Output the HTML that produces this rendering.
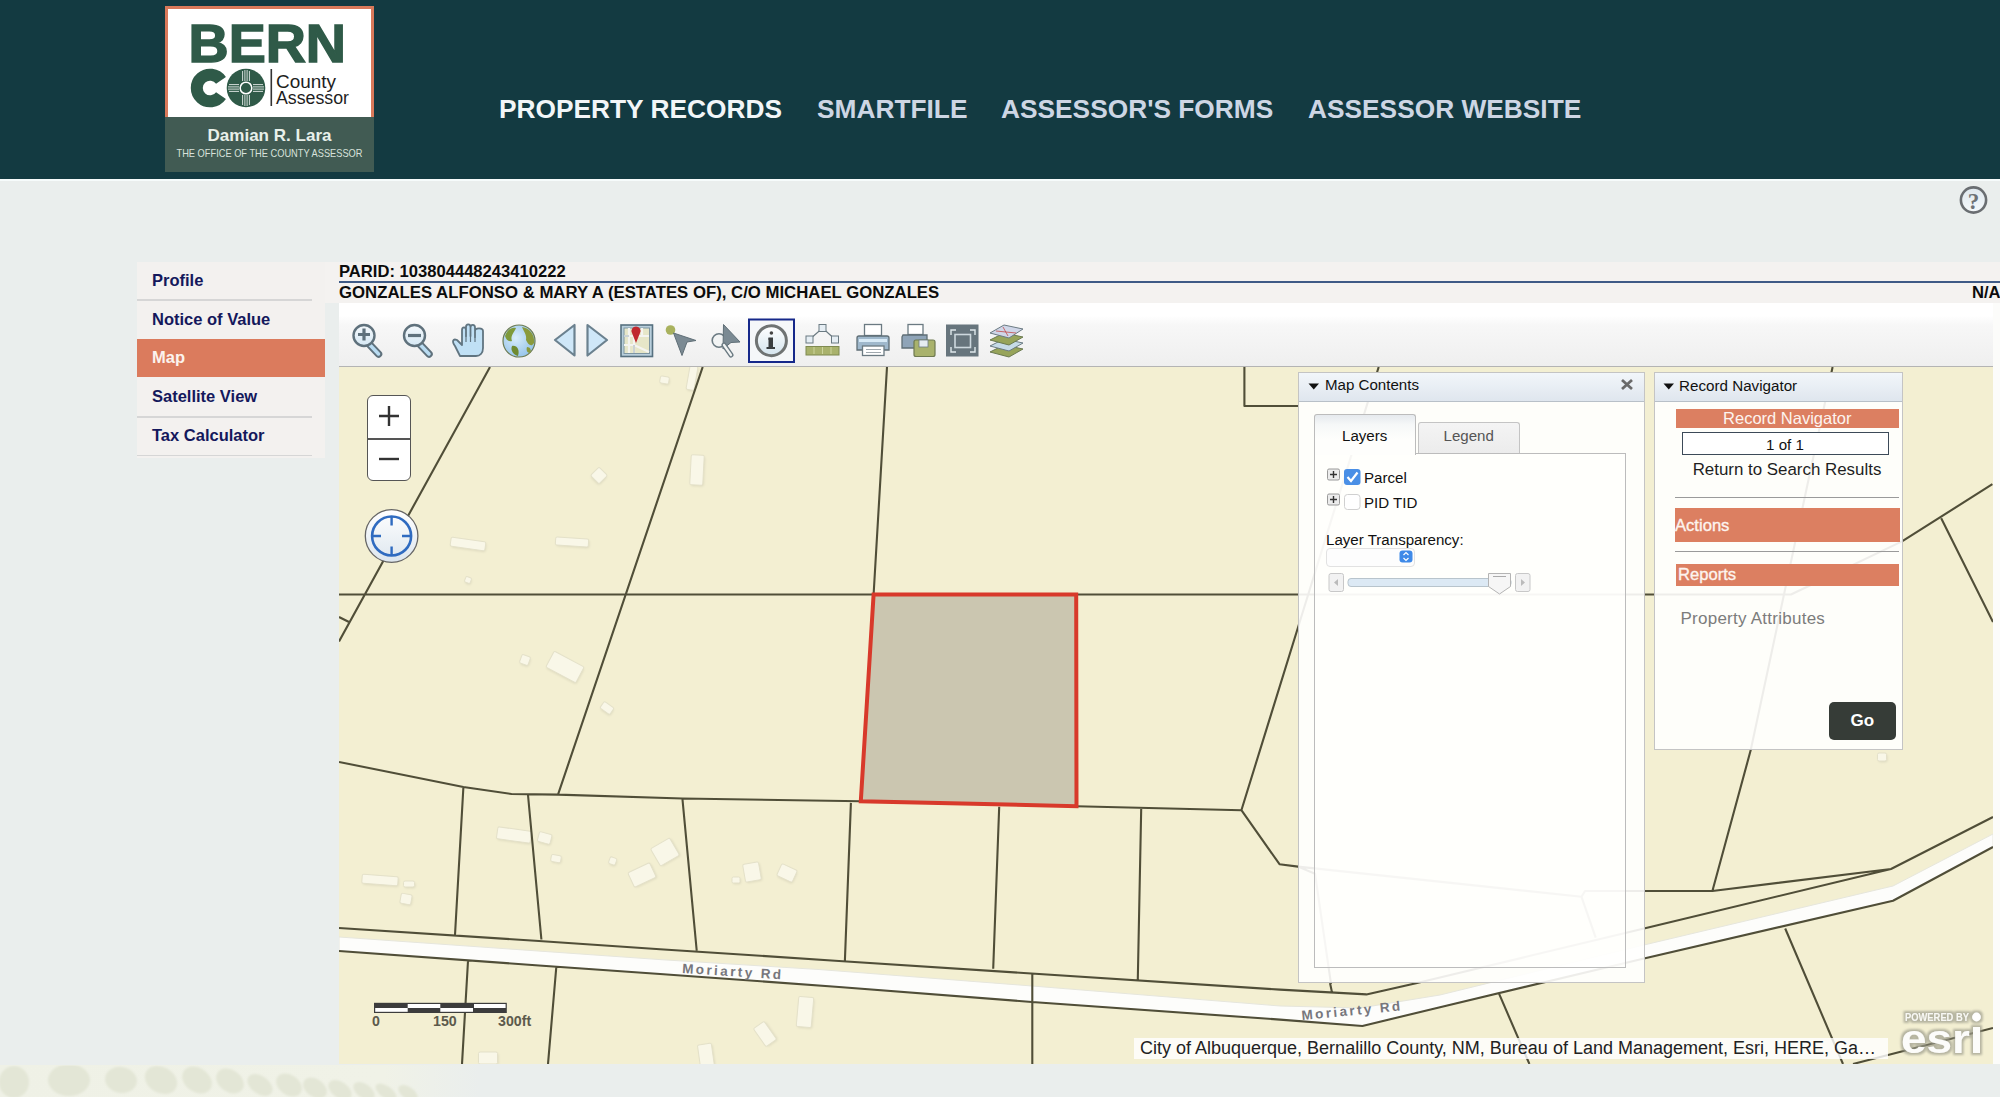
<!DOCTYPE html>
<html><head><meta charset="utf-8">
<style>
*{margin:0;padding:0;box-sizing:border-box}
html,body{width:2000px;height:1097px;overflow:hidden}
body{background:#eaeeed;font-family:"Liberation Sans",sans-serif;position:relative}
.abs{position:absolute}
#hdr{left:0;top:0;width:2000px;height:179px;background:#133a41}
#hdrline{left:0;top:179px;width:2000px;height:2px;background:#f6fbfb}
#logo{left:165px;top:6px;width:209px;height:166px;background:#415b53}
#logoW{left:0;top:0;width:209px;height:111px;background:#fff;border:3px solid #d9795a;border-bottom:none}
.nav{top:92px;font-size:26.3px;font-weight:bold;color:#cdd6e4;white-space:nowrap;line-height:34px}
.li{position:absolute;left:0;width:175px;height:39px;font-size:16.5px;font-weight:bold;color:#14185c;padding-left:15px;white-space:nowrap}
.li span{position:absolute;left:15px;top:11px;line-height:16px}
.sep{position:absolute;left:0;width:175px;height:1.5px;background:#d6d6d6}
#content{left:325px;top:262px;width:1675px;height:41px;background:#f4f2f0}
#toolbar{left:339px;top:303px;width:1654px;height:64px;background:linear-gradient(#fff 0,#fff 20%,#f7f7f7 35%,#efefef 100%);border-bottom:1px solid #b4b4b4}
#map{left:339px;top:367px;width:1654px;height:697px;background:#f3efd2;overflow:hidden}
#rstrip{left:1993px;top:303px;width:7px;height:761px;background:#fcfcfa}
.bt{font-weight:bold;color:#0c0c0c;font-size:16.6px;white-space:nowrap;line-height:16px}
</style></head><body>
<div id="hdr" class="abs"></div>
<div id="hdrline" class="abs"></div>
<!-- LOGO -->
<div id="logo" class="abs"><div id="logoW" class="abs"></div>
<svg class="abs" style="left:0;top:0" width="209" height="166" viewBox="0 0 209 166">
 <text x="23.5" y="56.3" font-family="Liberation Sans" font-weight="bold" font-size="53.5" fill="#2f5a48" textLength="157.5" lengthAdjust="spacingAndGlyphs" style="stroke:#2f5a48;stroke-width:1.5">BERN</text>
 <path d="M56 74.4 A13.3 13.3 0 1 0 56 89.6" fill="none" stroke="#2f5a48" stroke-width="12"/>
 <circle cx="81" cy="82" r="19.3" fill="#2f5a48"/>
 <circle cx="81" cy="82" r="5.8" fill="#2f5a48" stroke="#fff" stroke-width="1.5"/>
 <g stroke="#fff" stroke-width="0.8" fill="none">
  <path d="M77.6 65v10M79.9 64v11M82.1 64v11M84.4 65v10"/>
  <path d="M77.6 89v10M79.9 89v11M82.1 89v11M84.4 89v10"/>
  <path d="M64 78.6h10M63 80.9h11M63 83.1h11M64 85.4h10"/>
  <path d="M88 78.6h10M88 80.9h11M88 83.1h11M88 85.4h10"/>
 </g>
 <rect x="105.5" y="63" width="1.6" height="37" fill="#333"/>
 <text x="111" y="82" font-family="Liberation Sans" font-size="17.5" fill="#1e1e1e" textLength="60" lengthAdjust="spacingAndGlyphs">County</text>
 <text x="111" y="98" font-family="Liberation Sans" font-size="17.5" fill="#1e1e1e" textLength="73" lengthAdjust="spacingAndGlyphs">Assessor</text>
 <text x="104.5" y="135" text-anchor="middle" font-family="Liberation Sans" font-weight="bold" font-size="17" fill="#e8f0ea" textLength="124" lengthAdjust="spacingAndGlyphs">Damian R. Lara</text>
 <text x="104.5" y="151" text-anchor="middle" font-family="Liberation Sans" font-size="10.5" fill="#d8e2dc" textLength="186" lengthAdjust="spacingAndGlyphs">THE OFFICE OF THE COUNTY ASSESSOR</text>
</svg>
</div>
<div class="abs nav" style="left:499px;color:#f2f6f8">PROPERTY RECORDS</div>
<div class="abs nav" style="left:817px">SMARTFILE</div>
<div class="abs nav" style="left:1001px">ASSESSOR'S FORMS</div>
<div class="abs nav" style="left:1308px">ASSESSOR WEBSITE</div>

<!-- help icon -->
<svg class="abs" style="left:1958px;top:185px" width="31" height="31" viewBox="0 0 31 31">
 <defs><linearGradient id="hg" x1="0" y1="0" x2="0" y2="1"><stop offset="0" stop-color="#dfe8ee"/><stop offset="1" stop-color="#f4f8fa"/></linearGradient></defs><circle cx="15.5" cy="15" r="12.6" fill="url(#hg)" stroke="#6a6e72" stroke-width="2.6"/>
 <text x="15.5" y="23.5" text-anchor="middle" font-family="Liberation Serif" font-weight="bold" font-size="23" fill="#6e7276">?</text>
</svg>

<div id="content" class="abs"></div>
<!-- left nav -->
<div class="abs" style="left:137px;top:262px;width:188px;height:196px;background:#f3f1ef">
 <div class="li" style="top:0"><span style="top:9.7px">Profile</span></div>
 <div class="sep" style="top:37px"></div>
 <div class="li" style="top:39px"><span style="top:9.7px">Notice of Value</span></div>
 <div class="li" style="top:77px;width:188px;height:38px;background:#db7b5d;color:#fbf3ee"><span style="top:9.7px">Map</span></div>
 <div class="li" style="top:116px"><span style="top:9.7px">Satellite View</span></div>
 <div class="sep" style="top:154px"></div>
 <div class="li" style="top:155px"><span style="top:9.7px">Tax Calculator</span></div>
 <div class="sep" style="top:192.5px"></div>
</div>

<div class="abs bt" style="left:339px;top:264px">PARID: 103804448243410222</div>
<div class="abs" style="left:339px;top:281px;width:1661px;height:1.5px;background:#3e5a86"></div>
<div class="abs bt" style="left:339px;top:284.5px;font-size:16.75px">GONZALES ALFONSO &amp; MARY A (ESTATES OF), C/O MICHAEL GONZALES</div>
<div class="abs bt" style="left:1972px;top:284.5px">N/A</div>

<div id="toolbar" class="abs"></div>
<div id="rstrip" class="abs"></div>
<div id="map" class="abs"></div>
<!--TOOLS-->
<svg class="abs" style="left:339px;top:303px" width="700" height="64" viewBox="339 303 700 64">
 <defs>
  <linearGradient id="lens" x1="0" y1="0" x2="0" y2="1"><stop offset="0" stop-color="#f4f8fb"/><stop offset="1" stop-color="#d6e8f4"/></linearGradient>
  <radialGradient id="glb" cx="0.4" cy="0.4" r="0.7"><stop offset="0" stop-color="#d8ecfa"/><stop offset="1" stop-color="#8fc0e8"/></radialGradient>
  <linearGradient id="infog" x1="0" y1="0" x2="0" y2="1"><stop offset="0" stop-color="#ffffff"/><stop offset="1" stop-color="#d4e4ee"/></linearGradient>
 </defs>
 <!-- zoom in -->
 <path d="M370 345 L378.5 354" stroke="#5f717c" stroke-width="7.5" stroke-linecap="round"/>
 <path d="M370 345 L378.5 354" stroke="#b9dcf2" stroke-width="3.5" stroke-linecap="round"/>
 <circle cx="364" cy="335.5" r="10.5" fill="url(#lens)" stroke="#5f717c" stroke-width="2.4"/>
 <path d="M358 334.5h12M364 328.5v12" stroke="#5f717c" stroke-width="3.2"/>
 <!-- zoom out -->
 <path d="M420.5 345 L429 354" stroke="#5f717c" stroke-width="7.5" stroke-linecap="round"/>
 <path d="M420.5 345 L429 354" stroke="#b9dcf2" stroke-width="3.5" stroke-linecap="round"/>
 <circle cx="414.5" cy="335.5" r="10.5" fill="url(#lens)" stroke="#5f717c" stroke-width="2.4"/>
 <path d="M408 335.5h13" stroke="#5f717c" stroke-width="3.2"/>
 <!-- hand -->
 <path d="M460 356 L455 346 C451.5 341 453 338.5 457 340 L462 345 L462 330 C462 326.5 466 326.5 466 330 L466 336 L466 327 C466 323.5 470.5 323.5 470.5 327 L470.5 336 L470.5 327.5 C470.5 324 475 324 475 327.5 L475 337 L475 331 C475 327.5 483 327.5 483 331 L483 348 C483 353 480 356 476 356 Z" fill="#c0e0f5" stroke="#607480" stroke-width="1.8" stroke-linejoin="round"/>
 <path d="M466 336v6M470.5 336v6M475 337v5" stroke="#607480" stroke-width="1.2"/>
 <!-- globe -->
 <circle cx="519" cy="341" r="16" fill="url(#glb)" stroke="#6b7a50" stroke-width="1.2"/>
 <path d="M505 336 C508 328 513 327 516 328 C514 333 510 336 512 341 C509 342 506 340 505 336Z" fill="#7f9a3a"/>
 <path d="M522 327 C530 328 535 335 534 343 C531 348 528 344 526 340 C527 335 524 332 522 327Z" fill="#8a9a3c"/>
 <path d="M512 346 C517 345 520 350 518 356 C514 355 510 351 512 346Z" fill="#6f8a30"/>
 <path d="M527 347 C530 347 532 350 530 353 C527 353 526 350 527 347Z" fill="#8a9a3c"/>
 <!-- prev / next -->
 <path d="M555 340 L574.5 325 L574.5 355.5 Z" fill="#cfe7f8" stroke="#6b818f" stroke-width="2.2" stroke-linejoin="round"/>
 <path d="M587.5 325 L607 340 L587.5 355.5 Z" fill="#cfe7f8" stroke="#6b818f" stroke-width="2.2" stroke-linejoin="round"/>
 <!-- map icon -->
 <rect x="621" y="325" width="31.5" height="31.5" fill="#b9cfdc" stroke="#56707f" stroke-width="1.6"/>
 <rect x="624" y="328" width="25.5" height="25.5" fill="#e6e6c8" stroke="#7d95a2" stroke-width="1"/>
 <path d="M624 336h25M624 345h10M629 328v25M634 336v17M642 328v8M634 345 L649 352" stroke="#f4f4f0" stroke-width="2.2"/>
 <path d="M629 336 L624 336M634 345 L634 353" stroke="#8aa0aa" stroke-width="0.8"/>
 <path d="M636 343 L632 333 A4.5 4.5 0 1 1 640 333 Z" fill="#c0282e"/>
 <!-- select arrow -->
 <circle cx="670.5" cy="330" r="4.8" fill="#a9b25e"/>
 <path d="M673.5 333 L696 340.5 L687 342 L682 355.5 Z" fill="#7b8a93" stroke="#5f6e76" stroke-width="1"/>
 <!-- select by shape -->
 <circle cx="719" cy="340.5" r="6.8" fill="#f2f4f4" stroke="#6b7a82" stroke-width="1.6"/>
 <path d="M723.5 324.5 L740 342 L731 342.5 L723 349 Z" fill="#7b8a93" stroke="#5f6e76" stroke-width="1"/>
 <path d="M724 345 L731 355" stroke="#6b7a82" stroke-width="5" stroke-linecap="round"/>
 <path d="M724 345 L731 355" stroke="#f2f4f4" stroke-width="2.2" stroke-linecap="round"/>
 <!-- info selected -->
 <rect x="749" y="319.5" width="45" height="42.5" fill="#f5f7f9" stroke="#16288a" stroke-width="2"/>
 <circle cx="771.4" cy="340.7" r="15" fill="url(#infog)" stroke="#6f7373" stroke-width="3"/>
 <circle cx="771.4" cy="333" r="1.8" fill="#444"/>
 <path d="M768.5 337.5h4.5v9.5h2v2h-8.5v-2h2v-7.5h-0.5z" fill="#3a3e40"/>
 <!-- measure -->
 <path d="M809.5 339.5 L822.6 328 L835.2 339.5" fill="none" stroke="#6b7a82" stroke-width="1.2"/>
 <rect x="819" y="324.5" width="7" height="7" fill="#e6eef4" stroke="#6b7a82" stroke-width="1"/>
 <rect x="806" y="336" width="7" height="7" fill="#e6eef4" stroke="#6b7a82" stroke-width="1"/>
 <rect x="831.5" y="336" width="7" height="7" fill="#e6eef4" stroke="#6b7a82" stroke-width="1"/>
 <rect x="806" y="346.5" width="33" height="8.5" fill="#a9b26c" stroke="#7f8a50" stroke-width="1"/>
 <path d="M814 347v7M822.5 347v7M831 347v7" stroke="#cdd49c" stroke-width="1"/>
 <!-- print -->
 <rect x="864.5" y="324.5" width="17" height="11" fill="#fff" stroke="#6b7a82" stroke-width="1.3"/>
 <path d="M859 336 h28 a2 2 0 0 1 2 2 v12 h-32 v-12 a2 2 0 0 1 2-2z" fill="#9fb8cc" stroke="#5f6e76" stroke-width="1.3"/>
 <rect x="859" y="339" width="28" height="3" fill="#d8eaf6"/>
 <rect x="862.5" y="346" width="21.5" height="9.5" fill="#fff" stroke="#6b7a82" stroke-width="1.3"/>
 <path d="M866 349.5h15M866 352.5h15" stroke="#a0a8ae" stroke-width="1"/>
 <!-- print2 -->
 <rect x="908" y="324.5" width="15" height="10" fill="#fff" stroke="#6b7a82" stroke-width="1.3"/>
 <path d="M903 335 h24 v13 h-25 v-11z" fill="#8fa4b8" stroke="#5f6e76" stroke-width="1.3"/>
 <rect x="914" y="340" width="21" height="16.5" rx="2" fill="#a9b26c" stroke="#6f7a50" stroke-width="1.2"/>
 <rect x="919" y="340" width="9" height="7" fill="#e6ecf0" stroke="#6b7a82" stroke-width="0.8"/>
 <!-- full extent -->
 <rect x="946" y="324.5" width="32.5" height="32" fill="#67757d"/>
 <rect x="955" y="334.5" width="15.5" height="13" fill="none" stroke="#cdd8de" stroke-width="1.6"/>
 <path d="M951 335v-5h5M970 330h5v5M951 347v5h5M970 352h5v-5" fill="none" stroke="#dfe8ec" stroke-width="1.4"/>
 <!-- layers -->
 <path d="M990 352 L1004 345 L1023 349 L1009 357 Z" fill="#97a45a" stroke="#6b7a50" stroke-width="1"/>
 <path d="M990 346 L1004 339 L1023 343 L1009 351 Z" fill="#c6dbe8" stroke="#6b7a82" stroke-width="1"/>
 <path d="M990 340 L1004 333 L1023 337 L1009 345 Z" fill="#97a45a" stroke="#6b7a50" stroke-width="1"/>
 <path d="M990 333 L1004 325 L1023 329 L1009 338 Z" fill="#cfd6e8" stroke="#6b7a82" stroke-width="1"/>
 <path d="M996 331 L1016 333M1003 327 L1008 336" stroke="#c24a4a" stroke-width="0.8"/>
</svg>


<!--MAPSVG-->
<svg class="abs" style="left:339px;top:367px" width="1654" height="697" viewBox="339 367 1654 697">
<defs><filter id="bsh" x="-50%" y="-50%" width="200%" height="200%"><feGaussianBlur stdDeviation="0.9"/></filter></defs>
<rect x="339" y="367" width="1654" height="697" fill="#f3efd2"/>
<rect x="451.5" y="540.7" width="35" height="9" rx="2" fill="#dedabf" transform="rotate(8 468 544)" filter="url(#bsh)"/>
<rect x="450.5" y="539.5" width="35" height="9" rx="1.5" fill="#f9f7e8" stroke="#e4e1c9" stroke-width="1" transform="rotate(8 468 544)"/>
<rect x="556.5" y="539.2" width="33" height="8" rx="2" fill="#dedabf" transform="rotate(4 572 542)" filter="url(#bsh)"/>
<rect x="555.5" y="538.0" width="33" height="8" rx="1.5" fill="#f9f7e8" stroke="#e4e1c9" stroke-width="1" transform="rotate(4 572 542)"/>
<rect x="594.0" y="470.7" width="12" height="12" rx="2" fill="#dedabf" transform="rotate(45 599 475.5)" filter="url(#bsh)"/>
<rect x="593.0" y="469.5" width="12" height="12" rx="1.5" fill="#f9f7e8" stroke="#e4e1c9" stroke-width="1" transform="rotate(45 599 475.5)"/>
<rect x="691.5" y="456.2" width="13" height="30" rx="2" fill="#dedabf" transform="rotate(3 697 470)" filter="url(#bsh)"/>
<rect x="690.5" y="455.0" width="13" height="30" rx="1.5" fill="#f9f7e8" stroke="#e4e1c9" stroke-width="1" transform="rotate(3 697 470)"/>
<rect x="661.0" y="377.7" width="9" height="7" rx="2" fill="#dedabf" transform="rotate(10 664.5 380)" filter="url(#bsh)"/>
<rect x="660.0" y="376.5" width="9" height="7" rx="1.5" fill="#f9f7e8" stroke="#e4e1c9" stroke-width="1" transform="rotate(10 664.5 380)"/>
<rect x="549.0" y="659.2" width="34" height="18" rx="2" fill="#dedabf" transform="rotate(28 565 667)" filter="url(#bsh)"/>
<rect x="548.0" y="658.0" width="34" height="18" rx="1.5" fill="#f9f7e8" stroke="#e4e1c9" stroke-width="1" transform="rotate(28 565 667)"/>
<rect x="521.5" y="656.7" width="9" height="9" rx="2" fill="#dedabf" transform="rotate(20 525 660)" filter="url(#bsh)"/>
<rect x="520.5" y="655.5" width="9" height="9" rx="1.5" fill="#f9f7e8" stroke="#e4e1c9" stroke-width="1" transform="rotate(20 525 660)"/>
<rect x="466.0" y="578.2" width="6" height="6" rx="2" fill="#dedabf" transform="rotate(20 468 580)" filter="url(#bsh)"/>
<rect x="465.0" y="577.0" width="6" height="6" rx="1.5" fill="#f9f7e8" stroke="#e4e1c9" stroke-width="1" transform="rotate(20 468 580)"/>
<rect x="602.0" y="705.2" width="12" height="8" rx="2" fill="#dedabf" transform="rotate(35 607 708)" filter="url(#bsh)"/>
<rect x="601.0" y="704.0" width="12" height="8" rx="1.5" fill="#f9f7e8" stroke="#e4e1c9" stroke-width="1" transform="rotate(35 607 708)"/>
<rect x="498.0" y="830.2" width="34" height="12" rx="2" fill="#dedabf" transform="rotate(8 514 835)" filter="url(#bsh)"/>
<rect x="497.0" y="829.0" width="34" height="12" rx="1.5" fill="#f9f7e8" stroke="#e4e1c9" stroke-width="1" transform="rotate(8 514 835)"/>
<rect x="539.2" y="834.2" width="13" height="10" rx="2" fill="#dedabf" transform="rotate(15 544.7 838)" filter="url(#bsh)"/>
<rect x="538.2" y="833.0" width="13" height="10" rx="1.5" fill="#f9f7e8" stroke="#e4e1c9" stroke-width="1" transform="rotate(15 544.7 838)"/>
<rect x="552.0" y="856.3" width="10" height="7" rx="2" fill="#dedabf" transform="rotate(10 556 858.6)" filter="url(#bsh)"/>
<rect x="551.0" y="855.1" width="10" height="7" rx="1.5" fill="#f9f7e8" stroke="#e4e1c9" stroke-width="1" transform="rotate(10 556 858.6)"/>
<rect x="610.2" y="858.7" width="7" height="7" rx="2" fill="#dedabf" transform="rotate(20 612.7 861)" filter="url(#bsh)"/>
<rect x="609.2" y="857.5" width="7" height="7" rx="1.5" fill="#f9f7e8" stroke="#e4e1c9" stroke-width="1" transform="rotate(20 612.7 861)"/>
<rect x="631.0" y="868.2" width="24" height="16" rx="2" fill="#dedabf" transform="rotate(-25 642 875)" filter="url(#bsh)"/>
<rect x="630.0" y="867.0" width="24" height="16" rx="1.5" fill="#f9f7e8" stroke="#e4e1c9" stroke-width="1" transform="rotate(-25 642 875)"/>
<rect x="655.0" y="843.2" width="22" height="20" rx="2" fill="#dedabf" transform="rotate(-30 665 852)" filter="url(#bsh)"/>
<rect x="654.0" y="842.0" width="22" height="20" rx="1.5" fill="#f9f7e8" stroke="#e4e1c9" stroke-width="1" transform="rotate(-30 665 852)"/>
<rect x="745.0" y="864.2" width="16" height="18" rx="2" fill="#dedabf" transform="rotate(-10 752 872)" filter="url(#bsh)"/>
<rect x="744.0" y="863.0" width="16" height="18" rx="1.5" fill="#f9f7e8" stroke="#e4e1c9" stroke-width="1" transform="rotate(-10 752 872)"/>
<rect x="733.0" y="878.2" width="8" height="6" rx="2" fill="#dedabf" transform="rotate(0 736 880)" filter="url(#bsh)"/>
<rect x="732.0" y="877.0" width="8" height="6" rx="1.5" fill="#f9f7e8" stroke="#e4e1c9" stroke-width="1" transform="rotate(0 736 880)"/>
<rect x="779.5" y="867.7" width="17" height="13" rx="2" fill="#dedabf" transform="rotate(25 787 873)" filter="url(#bsh)"/>
<rect x="778.5" y="866.5" width="17" height="13" rx="1.5" fill="#f9f7e8" stroke="#e4e1c9" stroke-width="1" transform="rotate(25 787 873)"/>
<rect x="363.0" y="876.7" width="36" height="9" rx="2" fill="#dedabf" transform="rotate(4 380 880)" filter="url(#bsh)"/>
<rect x="362.0" y="875.5" width="36" height="9" rx="1.5" fill="#f9f7e8" stroke="#e4e1c9" stroke-width="1" transform="rotate(4 380 880)"/>
<rect x="404.5" y="882.2" width="11" height="6" rx="2" fill="#dedabf" transform="rotate(0 409 884)" filter="url(#bsh)"/>
<rect x="403.5" y="881.0" width="11" height="6" rx="1.5" fill="#f9f7e8" stroke="#e4e1c9" stroke-width="1" transform="rotate(0 409 884)"/>
<rect x="401.5" y="895.2" width="11" height="10" rx="2" fill="#dedabf" transform="rotate(10 406 899)" filter="url(#bsh)"/>
<rect x="400.5" y="894.0" width="11" height="10" rx="1.5" fill="#f9f7e8" stroke="#e4e1c9" stroke-width="1" transform="rotate(10 406 899)"/>
<rect x="798.5" y="998.2" width="15" height="30" rx="2" fill="#dedabf" transform="rotate(5 805 1012)" filter="url(#bsh)"/>
<rect x="797.5" y="997.0" width="15" height="30" rx="1.5" fill="#f9f7e8" stroke="#e4e1c9" stroke-width="1" transform="rotate(5 805 1012)"/>
<rect x="759.5" y="1024.2" width="13" height="22" rx="2" fill="#dedabf" transform="rotate(-35 765 1034)" filter="url(#bsh)"/>
<rect x="758.5" y="1023.0" width="13" height="22" rx="1.5" fill="#f9f7e8" stroke="#e4e1c9" stroke-width="1" transform="rotate(-35 765 1034)"/>
<rect x="700.0" y="1045.2" width="14" height="24" rx="2" fill="#dedabf" transform="rotate(-8 706 1056)" filter="url(#bsh)"/>
<rect x="699.0" y="1044.0" width="14" height="24" rx="1.5" fill="#f9f7e8" stroke="#e4e1c9" stroke-width="1" transform="rotate(-8 706 1056)"/>
<rect x="479.5" y="1053.2" width="19" height="12" rx="2" fill="#dedabf" transform="rotate(0 488 1058)" filter="url(#bsh)"/>
<rect x="478.5" y="1052.0" width="19" height="12" rx="1.5" fill="#f9f7e8" stroke="#e4e1c9" stroke-width="1" transform="rotate(0 488 1058)"/>
<rect x="1878.5" y="754.2" width="9" height="8" rx="2" fill="#dedabf" transform="rotate(0 1882 757)" filter="url(#bsh)"/>
<rect x="1877.5" y="753.0" width="9" height="8" rx="1.5" fill="#f9f7e8" stroke="#e4e1c9" stroke-width="1" transform="rotate(0 1882 757)"/>
<rect x="689.0" y="367.2" width="8" height="24" rx="2" fill="#dedabf" transform="rotate(10 692 378)" filter="url(#bsh)"/>
<rect x="688.0" y="366.0" width="8" height="24" rx="1.5" fill="#f9f7e8" stroke="#e4e1c9" stroke-width="1" transform="rotate(10 692 378)"/>
<path d="M339.0 937.0 L660.0 959.6 L820.0 969.6 L1032.0 986.0 L1280.0 1006.0 L1360.0 1008.0 L1440.0 995.0 L1644.0 945.0 L1893.0 886.0 L1993.0 834.0 L1993.0 847.0 L1893.0 900.7 L1644.0 958.5 L1440.0 1007.2 L1362.4 1026.0 L1280.0 1019.6 L1032.0 1002.0 L839.0 987.0 L660.0 974.0 L539.0 965.5 L339.0 951.0 Z" fill="#fdfdfb" stroke="#e6e6dc" stroke-width="1"/>
<path d="M873.6 594.5 L1076.2 594.5 L1076.5 806.2 L860.8 801.2 Z" fill="#cbc6b0"/>
<path d="M490.0 367.0 L339.0 641.4 M339.0 617.0 L349.0 622.0 M339.0 594.5 L1791.0 594.5 L1902.0 541.4 M702.7 367.0 L558.0 794.6 M887.0 367.0 L873.6 594.5 M1244.4 367.0 L1244.4 406.0 L1298.0 406.0 M1378.7 367.0 L1298.6 625.5 L1241.4 810.2 M339.0 762.0 L463.4 787.0 L511.5 794.0 L558.0 794.6 L682.4 798.5 L860.8 801.2 L1076.5 806.2 L1241.4 810.2 M1241.4 810.2 L1279.5 864.2 L1298.0 866.6 L1581.5 896.8 L1585.0 891.0 L1644.0 891.0 M1581.5 896.8 L1595.7 937.7 M1298.0 866.6 L1315.0 873.7 L1331.0 983.9 M1832.6 367.0 L1750.8 749.8 M463.4 787.0 L455.0 935.0 M528.0 795.0 L541.4 939.5 M682.4 798.5 L696.7 950.5 M850.9 802.9 L844.9 960.4 M999.2 806.8 L993.2 968.7 M1141.2 808.8 L1137.8 979.4 M339.0 928.0 L539.0 941.0 L660.0 949.2 L839.0 961.0 L1280.0 989.6 L1366.4 994.4 L1416.0 983.2 L1644.0 928.5 L1891.0 869.0 L1993.0 817.0 M339.0 951.0 L539.0 965.5 L660.0 974.0 L839.0 987.0 L1032.0 1002.0 L1280.0 1019.6 L1362.4 1026.0 L1440.0 1007.2 L1644.0 958.5 L1893.0 900.7 L1993.0 847.0 M468.0 961.0 L462.0 1064.0 M556.3 967.0 L548.0 1064.0 M1032.3 973.7 L1032.3 1064.0 M1498.5 992.4 L1529.4 1064.0 M1785.2 928.5 L1843.0 1064.0 M1330.0 983.0 L1332.0 992.4 M1750.8 749.8 L1712.4 891.0 M1644.0 891.0 L1712.4 891.0 L1891.0 869.0 M1902.0 541.4 L1992.4 484.2 M1941.2 518.3 L1993.0 622.0 M1853.0 1064.0 L1993.0 1028.0" fill="none" stroke="#504e38" stroke-width="2.1" stroke-linejoin="round"/>
<path d="M873.6 594.5 L1076.2 594.5 L1076.5 806.2 L860.8 801.2 Z" fill="none" stroke="#d8392b" stroke-width="4" stroke-linejoin="miter"/>
<text x="682" y="973" font-family="Liberation Sans" font-weight="bold" font-size="13.5" fill="#77777d" textLength="99" lengthAdjust="spacing" transform="rotate(3.6 682 973)">Moriarty  Rd</text>
<text x="1302" y="1020" font-family="Liberation Sans" font-weight="bold" font-size="13.5" fill="#77777d" textLength="99" lengthAdjust="spacing" transform="rotate(-5.5 1302 1020)">Moriarty  Rd</text>
<rect x="374" y="1002.8" width="132.8" height="10.2" fill="#3c3c3c"/>
<g fill="#fff"><rect x="407.7" y="1004" width="32.6" height="4"/><rect x="474" y="1004" width="31.6" height="4"/><rect x="375.2" y="1008" width="32.5" height="3.8"/><rect x="440.3" y="1008" width="32.7" height="3.8"/></g>
<g font-family="Liberation Sans" font-weight="bold" font-size="14.2" fill="#5c5a4c"><text x="372" y="1026">0</text><text x="433" y="1026">150</text><text x="498" y="1026">300ft</text></g>
</svg>
<!--/MAPSVG-->
<!--PANELS-->
<!-- zoom controls -->
<div class="abs" style="left:367px;top:395px;width:44px;height:86px;background:#fff;border:1.5px solid #555;border-radius:6px"></div>
<div class="abs" style="left:368px;top:438px;width:42px;height:1.5px;background:#555"></div>
<svg class="abs" style="left:367px;top:395px" width="44" height="86" viewBox="0 0 44 86">
 <path d="M12 21h20M22 11v20" stroke="#333" stroke-width="2.4"/>
 <path d="M12 64h20" stroke="#333" stroke-width="2.4"/>
</svg>
<svg class="abs" style="left:363px;top:508px" width="58" height="58" viewBox="0 0 58 58">
 <defs><linearGradient id="locg" x1="0" y1="0" x2="0" y2="1"><stop offset="0" stop-color="#ffffff"/><stop offset="1" stop-color="#dde6ee"/></linearGradient></defs>
 <circle cx="28.6" cy="28" r="26.3" fill="url(#locg)" stroke="#666" stroke-width="1.3"/>
 <circle cx="28.6" cy="28" r="19.5" fill="none" stroke="#2f6bc0" stroke-width="2.6"/>
 <path d="M28.6 8.5v9M28.6 38.5v9M9 28h9M39 28h9" stroke="#2f6bc0" stroke-width="2.4"/>
</svg>

<!-- Map Contents panel -->
<div class="abs" style="left:1298px;top:371.5px;width:347px;height:611px;background:rgba(255,255,254,0.9);border:1px solid #c4c4c4"></div>
<div class="abs" style="left:1299px;top:372.5px;width:345px;height:29px;background:linear-gradient(#f2f6fa,#dfe6ee);border-bottom:1.5px solid #b8c0c8"></div>
<svg class="abs" style="left:1308px;top:382px" width="12" height="8"><path d="M0.5 1.5h10.5l-5.25 6z" fill="#111"/></svg>
<div class="abs" style="left:1325px;top:377px;font-size:15.1px;line-height:16px;color:#111;white-space:nowrap">Map Contents</div>
<svg class="abs" style="left:1620px;top:378px" width="14" height="13"><path d="M2 2L12 11M12 2L2 11" stroke="#6a6a6a" stroke-width="2.8"/></svg>
<div class="abs" style="left:1314px;top:452.5px;width:312px;height:515px;background:rgba(255,255,254,0.5);border:1px solid #bcbcbc"></div>
<div class="abs" style="left:1314px;top:413.5px;width:102px;height:41px;background:linear-gradient(#e6eaee 0,#f6f8f8 25%,#fefefc 60%);border:1px solid #bcbcbc;border-bottom:none;border-radius:3px 3px 0 0"></div>
<div class="abs" style="left:1418px;top:422px;width:102px;height:31px;background:linear-gradient(#f4f4f4,#ececec);border:1px solid #c4c4c4;border-bottom:none;border-radius:3px 3px 0 0"></div>
<div class="abs" style="left:1342px;top:428px;font-size:15.1px;line-height:16px;color:#111">Layers</div>
<div class="abs" style="left:1443.5px;top:428px;font-size:15.1px;line-height:16px;color:#555">Legend</div>
<!-- layers -->
<svg class="abs" style="left:1326px;top:467px" width="40" height="45" viewBox="0 0 40 45">
 <rect x="1.5" y="2" width="12" height="11" rx="1.5" fill="#ececec" stroke="#9a9a9a" stroke-width="1"/>
 <path d="M4 7.5h7M7.5 4v7" stroke="#333" stroke-width="1.4"/>
 <rect x="1.5" y="27" width="12" height="11" rx="1.5" fill="#ececec" stroke="#9a9a9a" stroke-width="1"/>
 <path d="M4 32.5h7M7.5 29v7" stroke="#333" stroke-width="1.4"/>
 <rect x="18" y="2" width="16.5" height="16" rx="3" fill="#4a8fe6"/>
 <path d="M21.5 10 L25 14 L31.5 5.5" fill="none" stroke="#fff" stroke-width="2.2"/>
 <rect x="18.5" y="27.5" width="15.5" height="15" rx="3" fill="#fff" stroke="#d0d0d0" stroke-width="1"/>
</svg>
<div class="abs" style="left:1364px;top:469.7px;font-size:15.1px;line-height:16px;color:#111">Parcel</div>
<div class="abs" style="left:1364px;top:494.7px;font-size:15.1px;line-height:16px;color:#111">PID TID</div>
<div class="abs" style="left:1326px;top:532px;font-size:15.1px;line-height:16px;color:#111;white-space:nowrap">Layer Transparency:</div>
<div class="abs" style="left:1326px;top:548px;width:89px;height:19px;border:1px solid #e2e2e2;border-radius:4px;background:#fdfdfd"></div>
<svg class="abs" style="left:1399px;top:550px" width="14" height="13"><rect x="0.5" y="0.5" width="13" height="12" rx="3" fill="#3f8ae8"/><path d="M4.5 5l2.5-2.5 2.5 2.5M4.5 8l2.5 2.5 2.5-2.5" fill="none" stroke="#fff" stroke-width="1.2"/></svg>
<svg class="abs" style="left:1328px;top:572px" width="204" height="24" viewBox="0 0 204 24">
 <rect x="1" y="1.5" width="14.5" height="18" rx="2" fill="#f2f2f2" stroke="#c8c8c8"/>
 <path d="M10 7l-4 3.5 4 3.5z" fill="#bbb"/>
 <rect x="187.5" y="1.5" width="14.5" height="18" rx="2" fill="#f2f2f2" stroke="#c8c8c8"/>
 <path d="M193 7l4 3.5-4 3.5z" fill="#bbb"/>
 <rect x="20" y="6.5" width="163" height="8" rx="3" fill="#dce9f4" stroke="#b8c4cc"/>
 <path d="M160.5 1.5h22v13l-11 7.5-11-7.5z" fill="#f6f6f6" stroke="#b4b4b4"/>
 <path d="M165 4.5h13" stroke="#aaa"/>
</svg>

<!-- Record Navigator panel -->
<div class="abs" style="left:1653.5px;top:371.5px;width:249px;height:378px;background:rgba(255,255,254,0.9);border:1px solid #c4c4c4"></div>
<div class="abs" style="left:1654.5px;top:372.5px;width:247px;height:29px;background:linear-gradient(#f2f6fa,#dfe6ee);border-bottom:1.5px solid #b8c0c8"></div>
<svg class="abs" style="left:1663px;top:382px" width="12" height="8"><path d="M0.5 1.5h10.5l-5.25 6z" fill="#111"/></svg>
<div class="abs" style="left:1679px;top:377.5px;font-size:15.2px;line-height:16px;color:#111;white-space:nowrap">Record Navigator</div>
<div class="abs" style="left:1676px;top:409px;width:222.5px;height:19px;background:#dc7f61;color:#fdf4ef;font-size:16.5px;line-height:19px;text-align:center;white-space:nowrap">Record Navigator</div>
<div class="abs" style="left:1681.5px;top:432px;width:207px;height:23px;border:1.5px solid #3c4a58;background:#fff;color:#111;font-size:15.1px;line-height:23px;text-align:center">1 of 1</div>
<div class="abs" style="left:1676px;top:461px;width:222px;font-size:16.9px;line-height:17px;color:#1f1f1f;text-align:center;white-space:nowrap">Return to Search Results</div>
<div class="abs" style="left:1675px;top:496.5px;width:224px;height:1.5px;background:#9a9a9a"></div>
<div class="abs" style="left:1675px;top:508px;width:224.5px;height:34px;background:#dc7f61;color:#fdf4ef;font-size:16.6px;line-height:36px;white-space:nowrap;-webkit-text-stroke:0.35px #fdf4ef">Actions</div>
<div class="abs" style="left:1675px;top:550.5px;width:224px;height:1.5px;background:#9a9a9a"></div>
<div class="abs" style="left:1676px;top:563.5px;width:222.5px;height:22px;background:#dc7f61;color:#fdf4ef;font-size:16.6px;line-height:22px;padding-left:2px;white-space:nowrap;-webkit-text-stroke:0.35px #fdf4ef">Reports</div>
<div class="abs" style="left:1680.5px;top:610px;font-size:17px;line-height:17px;color:#7c7c7c;white-space:nowrap;letter-spacing:0.25px">Property Attributes</div>
<div class="abs" style="left:1829px;top:701.5px;width:66.5px;height:38px;background:#363c37;border-radius:5px;color:#fff;font-weight:bold;font-size:17px;line-height:38px;text-align:center">Go</div>

<!-- attribution -->
<div class="abs" style="left:1134px;top:1037.5px;width:754px;height:21px;background:rgba(255,255,255,0.82)"></div>
<div class="abs" style="left:1140px;top:1038px;font-size:18px;line-height:20px;color:#222;white-space:nowrap">City of Albuquerque, Bernalillo County, NM, Bureau of Land Management, Esri, HERE, Ga…</div>
<!-- esri logo -->
<svg class="abs" style="left:1893px;top:1003px" width="99" height="60" viewBox="-2 -2 99 60">
 <defs><filter id="esh" x="-20%" y="-20%" width="140%" height="140%"><feMorphology in="SourceAlpha" operator="dilate" radius="1.6" result="d"/><feGaussianBlur in="d" stdDeviation="1.2" result="b"/><feFlood flood-color="#9a9a8a" flood-opacity="0.7"/><feComposite in2="b" operator="in" result="s"/><feMerge><feMergeNode in="s"/><feMergeNode in="SourceGraphic"/></feMerge></filter></defs>
 <g filter="url(#esh)">
 <text x="10" y="16" font-family="Liberation Sans" font-weight="bold" font-size="10" fill="#f8f8f4" textLength="64" lengthAdjust="spacingAndGlyphs">POWERED BY</text>
 <circle cx="81.5" cy="12" r="4.4" fill="#fff"/>
 <text x="6" y="48" font-family="Liberation Sans" font-weight="bold" font-size="41" fill="#fcfcfa" textLength="69" lengthAdjust="spacingAndGlyphs">esr</text><rect x="78" y="22" width="7" height="26" fill="#fcfcfa"/>
 </g>
</svg>
<!-- bottom pattern -->
<div class="abs" style="left:0;top:1064px;width:2000px;height:33px;background:#eaeeed"></div>
<div class="abs" style="left:0;top:1065px;width:480px;height:32px;background:linear-gradient(90deg,#eff1e6 0,#f0f2e7 80%,rgba(234,238,237,0) 100%)"></div>
<svg class="abs" style="left:0;top:1064px" width="480" height="33" viewBox="0 0 480 33">
 <defs><filter id="bl"><feGaussianBlur stdDeviation="0.8"/></filter><clipPath id="bc"><rect x="0" y="1.5" width="480" height="32"/></clipPath></defs>
 <g fill="#e3e6d6" filter="url(#bl)" clip-path="url(#bc)"><ellipse cx="14" cy="18" rx="15" ry="16" transform="rotate(0 14 18)"/><ellipse cx="69" cy="16" rx="21" ry="16" transform="rotate(0 69 16)"/><ellipse cx="121" cy="16" rx="16" ry="13" transform="rotate(10 121 16)"/><ellipse cx="161" cy="16" rx="17" ry="13" transform="rotate(30 161 16)"/><ellipse cx="197" cy="16" rx="16" ry="12" transform="rotate(35 197 16)"/><ellipse cx="230" cy="17" rx="15" ry="11" transform="rotate(35 230 17)"/><ellipse cx="260" cy="21" rx="14" ry="9" transform="rotate(35 260 21)"/><ellipse cx="289" cy="21" rx="14" ry="10" transform="rotate(35 289 21)"/><ellipse cx="315" cy="24" rx="13" ry="9" transform="rotate(35 315 24)"/><ellipse cx="340" cy="26" rx="13" ry="8" transform="rotate(35 340 26)"/><ellipse cx="364" cy="27" rx="12" ry="7" transform="rotate(35 364 27)"/><ellipse cx="386" cy="28" rx="12" ry="6" transform="rotate(35 386 28)"/><ellipse cx="408" cy="29" rx="11" ry="6" transform="rotate(35 408 29)"/></g>
</svg>
<!--/PANELS-->
</body></html>
